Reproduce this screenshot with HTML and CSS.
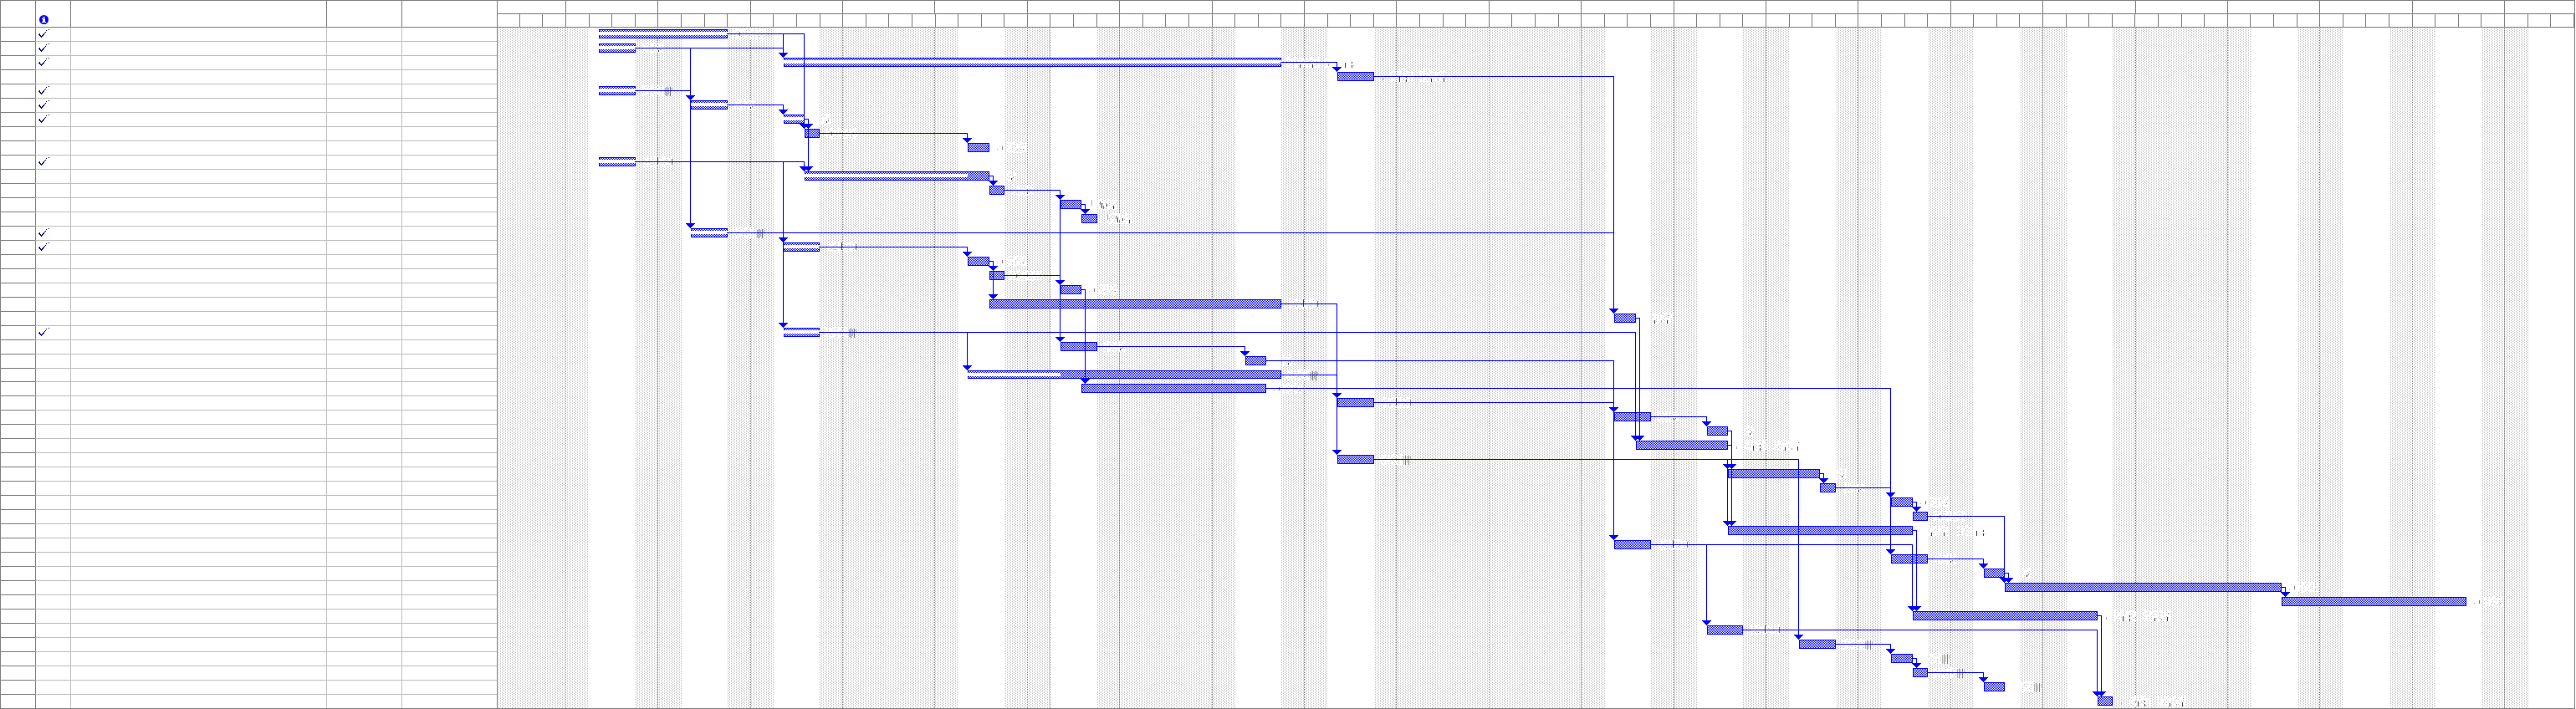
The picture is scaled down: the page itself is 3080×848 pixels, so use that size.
FILE: index.html
```html
<!DOCTYPE html>
<html lang="en">
<head>
<meta charset="utf-8">
<title>Gantt chart</title>
<link rel="stylesheet" href="styles.css">
</head>
<body>
<main class="gantt">
  <table class="tasks">
    <colgroup>
      <col class="col-id"><col class="col-info"><col class="col-name"><col class="col-duration"><col class="col-start">
    </colgroup>
    <thead>
      <tr>
        <th></th>
        <th class="info-head">
          <svg class="info-icon" width="11" height="11" viewBox="0 0 11 11" role="img" aria-label="Indicators">
            <circle cx="5.5" cy="5.5" r="5.5" fill="#0000ff"/>
            <path d="M4 2h3v1H4zM3 4h4v4h1v1H3V8h1V5H3z" fill="#fff"/>
          </svg>
        </th>
        <th></th><th></th><th></th>
      </tr>
    </thead>
    <tbody id="task-rows"></tbody>
  </table>
  <section class="chart">
    <div class="scale" id="major"></div>
    <div class="scale" id="minor"></div>
    <svg class="plot" id="plot" width="2483" height="814" viewBox="595 33 2483 814" shape-rendering="crispEdges">
      <defs>
        <pattern id="shade" width="4" height="2" patternUnits="userSpaceOnUse">
          <path d="M0 0h1v1H0zM2 1h1v1H2z" fill="#c0c0c0"/>
        </pattern>
        <pattern id="dither" width="2" height="2" patternUnits="userSpaceOnUse">
          <path d="M0 0h2v2H0z" fill="#fff"/>
          <path d="M0 0h1v1H0zM1 1h1v1H1z" fill="#0000ff"/>
        </pattern>
        <pattern id="speckle" width="7" height="5" patternUnits="userSpaceOnUse">
          <path d="M0 0h3v1H0zM4 0h1v2H4zM1 1h2v2H1zM3 2h3v1H3zM0 3h2v2H0zM3 4h3v1H3zM5 1h2v1H5z" fill="#fff"/>
        </pattern>
      </defs>
    </svg>
  </section>
</main>
<script src="chart.js"></script>
</body>
</html>
```
FILE: styles.css
```css
body {
  margin: 0;
  background: #fff;
  font-family: "Liberation Sans", Arial, sans-serif;
  font-size: 11px;
}

.gantt {
  display: flex;
  align-items: flex-start;
  padding-right: 1px;
}

.tasks {
  flex: none;
  width: 594px;
  table-layout: fixed;
  border-collapse: separate;
  border-spacing: 0;
  border-bottom: 1px solid #808080;
}

.col-id,
.col-info { width: 42px; }
.col-name { width: 306px; }
.col-duration { width: 90px; }
.col-start { width: 114px; }

.tasks th,
.tasks td {
  box-sizing: border-box;
  padding: 0;
  border-top: 1px solid #c0c0c0;
  border-left: 1px solid #c0c0c0;
  line-height: 0;
  text-align: left;
  vertical-align: top;
}

.tasks th {
  height: 32px;
  border-color: #808080;
}

.tasks td { height: 17px; }
.tasks .short td { height: 16px; }

.tasks tbody tr:first-child td { border-top-color: #808080; }
.tasks td:first-child { border-color: #808080; }
.tasks td:nth-child(2) { border-left-color: #808080; }

.tasks .info-head { padding: 17px 0 0 4px; }
.tasks .done { padding: 2px 0 0 3px; }

.chart {
  flex: 1;
  min-width: 0;
  overflow: hidden;
  border: 1px solid #808080;
}

.scale {
  display: flex;
  height: 15px;
  border-bottom: 1px solid #808080;
}

.scale span {
  flex: none;
  box-sizing: border-box;
  border-right: 1px solid #808080;
}

.plot { display: block; }
```
FILE: chart.js
```js
const SVG = 'http://www.w3.org/2000/svg';
const BLUE = '#0000ff';
const plotArea = document.getElementById('plot');

function add(name, attrs) {
  const el = document.createElementNS(SVG, name);
  for (const key in attrs) el.setAttribute(key, attrs[key]);
  plotArea.appendChild(el);
}
function box(x, y, width, height, fill) {
  add('rect', { x, y, width, height, fill });
}

/* Task table */
const finished = [1, 2, 3, 5, 6, 7, 10, 15, 16, 22];
const check = '<svg width="13" height="10" viewBox="0 0 13 10" shape-rendering="crispEdges" role="img" aria-label="Complete">' +
  '<path fill="#000080" d="M12 0h1v1h-1zM9 1h1v1H9zM8 3h1v1H8zM7 4h1v1H7zM6 5h1v2H6zM5 6h1v2H5zM4 7h1v1H4zM3 8h1v2H3zM4 8h1v1H4zM2 7h1v2H2zM1 5h1v3H1zM0 6h1v1H0z"/></svg>';
let rows = '';
for (let n = 1; n <= 48; n++) {
  const done = finished.includes(n);
  rows += `<tr${n === 25 ? ' class="short"' : ''}><td></td><td${done ? ' class="done"' : ''}>${done ? check : ''}</td><td></td><td></td><td></td></tr>`;
}
document.getElementById('task-rows').innerHTML = rows;

/* Time scale */
const majors = [676, 786, 897, 1007, 1117, 1228, 1338, 1449, 1559, 1669, 1780, 1890, 2001, 2111, 2221, 2332, 2442, 2553, 2663, 2773, 2884, 2994];
const minors = [];
for (let i = -2; i <= 87; i++) minors.push(Math.round(676 + i * 27.595));
function drawScale(id, ticks) {
  let last = 594;
  document.getElementById(id).innerHTML = ticks.map(x => {
    const cell = `<span style="width:${x - last}px"></span>`;
    last = x;
    return cell;
  }).join('');
}
drawScale('major', majors);
drawScale('minor', minors);

/* Shaded periods and grid lines */
const shaded = [[595, 703], [760, 815], [870, 925], [980, 1145], [1202, 1255], [1312, 1477], [1532, 1587], [1644, 1919], [1974, 2029], [2084, 2139], [2196, 2249], [2306, 2359], [2416, 2471], [2526, 2691], [2748, 2801], [2858, 2911], [2968, 3023]];
shaded.forEach(([a, b]) => box(a, 33, b - a, 814, 'url(#shade)'));
majors.concat(1255).forEach(x => add('path', { d: `M${x + 0.5} 34V847`, stroke: '#808080', 'stroke-dasharray': '1 1' }));

/* Bars: start, end, progress end */
const bars = [
  [716, 870, 870], [716, 760, 760], [937, 1532, 1532], [1599, 1643], [716, 760, 760],
  [826, 870, 870], [937, 962, 962], [962, 980], [1157, 1183], [716, 760, 760],
  [962, 1183, 1157], [1183, 1201], [1268, 1293], [1293, 1312], [826, 870, 870],
  [937, 980, 980], [1157, 1183], [1183, 1201], [1268, 1293], [1183, 1532],
  [1930, 1956], [937, 980, 980], [1268, 1312], [1489, 1514], [1157, 1532, 1268],
  [1293, 1514], [1599, 1643], [1930, 1974], [2041, 2066], [1956, 2066],
  [1599, 1643], [2066, 2176], [2176, 2195], [2261, 2287], [2287, 2305],
  [2066, 2287], [1930, 1974], [2261, 2305], [2372, 2397], [2397, 2728],
  [2728, 2949], [2287, 2508], [2041, 2084], [2151, 2195], [2261, 2287],
  [2287, 2305], [2372, 2397], [2508, 2526]
];
const barTop = n => (n <= 25 ? 18 + 17 * n : 17 + 17 * n);

bars.forEach(([a, b, progress], i) => {
  const n = i + 1, y = barTop(n), h = n === 25 ? 10 : 11;
  box(a, y, b - a, h, BLUE);
  box(a + 1, y + 1, b - a - 2, h - 2, 'url(#dither)');
  if (progress) box(a, y + 3, progress - a, 4, '#fff');
});

/* Label marks: white spans [from, to] and strokes [x, y, height, colour] */
const dark = '#404040', mid = '#808080', pale = '#b0b0b0';
const kinds = {
  tick: { spans: [[6, 45]], marks: [[14, 4, 4, mid], [38, 8, 1, pale]] },
  dot: { spans: [[8, 34]], marks: [[27, 8, 2, dark], [29, 7, 1, mid]] },
  stripes: { spans: [[6, 34]], marks: [[35, 2, 9, pale], [37, 1, 11, mid], [39, 2, 8, pale], [41, 1, 11, mid], [43, 2, 4, pale]] },
  tall: { spans: [[9, 44]], marks: [[26, 0, 9, dark], [43, 2, 7, mid], [18, 8, 1, mid]] },
  small: { spans: [[20, 32]], marks: [[26, 8, 2, dark], [28, 6, 2, pale]] },
  offset: { spans: [[20, 44]], marks: [[15, 4, 4, mid], [9, 7, 1, pale], [40, 7, 1, mid]] },
  pair: { spans: [[19, 45]], marks: [[22, 8, 4, dark], [30, 9, 2, pale], [37, 8, 4, dark], [39, 2, 1, mid]] },
  long: { spans: [[19, 46], [54, 87]], marks: [[10, 7, 3, pale], [30, 6, 6, dark], [38, 5, 2, dark], [38, 9, 3, dark], [68, 8, 4, dark], [76, 9, 2, pale], [83, 7, 5, dark], [84, 2, 1, mid]] },
  wide: { spans: [[5, 45], [52, 70]], marks: [[22, 8, 4, dark], [37, 8, 4, dark], [56, 7, 3, pale], [76, 6, 6, dark], [84, 5, 2, dark], [84, 9, 3, dark], [86, 9, 1, pale]] },
  word: { spans: [[10, 42]], marks: [[12, 0, 7, pale], [22, 2, 4, mid], [24, 4, 6, dark], [26, 7, 4, mid], [30, 5, 3, dark], [38, 7, 4, dark]] }
};
const labels = {
  tick: [1, 8, 18, 35], dot: [2, 6, 12, 23, 28, 33, 38], stripes: [5, 15, 22, 25, 31, 44, 45, 46, 47],
  tall: [10, 16, 20, 27, 37, 43], small: [7, 11, 24, 29, 32, 39], offset: [9, 17, 19, 26, 34, 40, 41],
  pair: [21], long: [4, 30, 42, 48], wide: [3, 36], word: [13, 14]
};
for (const kind in labels) {
  labels[kind].forEach(n => {
    const x = bars[n - 1][1], y = barTop(n);
    kinds[kind].spans.forEach(([a, b]) => box(x + a, y - 1, b - a, 13, 'url(#speckle)'));
    kinds[kind].marks.forEach(([dx, dy, h, fill]) => box(x + dx, y + dy, 1, h, fill));
  });
}

/* Links: source row, x of the drop, target rows (none: joins another link) */
const links = [
  [1, 936, [3]], [1, 961, [8]], [2, 936, []], [2, 825, [6, 15]], [3, 1598, [4]],
  [4, 1929, [21]], [5, 825, []], [6, 936, [7]], [7, 966, [8, 11]], [8, 1156, [9]],
  [10, 961, [11]], [10, 936, [16, 22]], [11, 1187, [12]], [12, 1267, [13, 19, 23]], [13, 1297, [14]],
  [15, 1929, []], [16, 1156, [17]], [17, 1187, [18, 20]], [18, 1267, []], [19, 1297, [26]],
  [20, 1598, [27, 31]], [21, 1960, [30]], [22, 1955, [30]], [22, 1156, [25]], [23, 1488, [24]],
  [24, 1929, [28, 37]], [25, 1598, []], [26, 2260, [34, 38]], [27, 1929, []], [28, 2040, [29]],
  [29, 2070, [32, 36]], [30, 2070, []], [31, 2150, [44]], [31, 2065, [32, 36]], [32, 2180, [33]],
  [33, 2260, []], [34, 2291, [35]], [35, 2396, [40]], [36, 2291, [42]], [37, 2286, [42]],
  [37, 2040, [43]], [38, 2371, [39]], [39, 2401, [40]], [40, 2732, [41]], [42, 2512, [48]],
  [43, 2507, [48]], [44, 2260, [45]], [45, 2291, [46]], [46, 2371, [47]]
];
links.forEach(([n, x, targets]) => {
  const y = barTop(n) + 5, from = bars[n - 1][1] - 1;
  box(from, y, x - from + 1, 1, BLUE);
  targets.forEach(t => {
    const end = barTop(t);
    box(x, y, 1, end - y, BLUE);
    add('path', { d: `M${x - 5} ${end - 6}h11v1h-1v1h-1v1h-1v1h-1v1h-1v1h-1v-1h-1v-1h-1v-1h-1v-1h-1v-1h-1z`, fill: BLUE });
  });
});
```
